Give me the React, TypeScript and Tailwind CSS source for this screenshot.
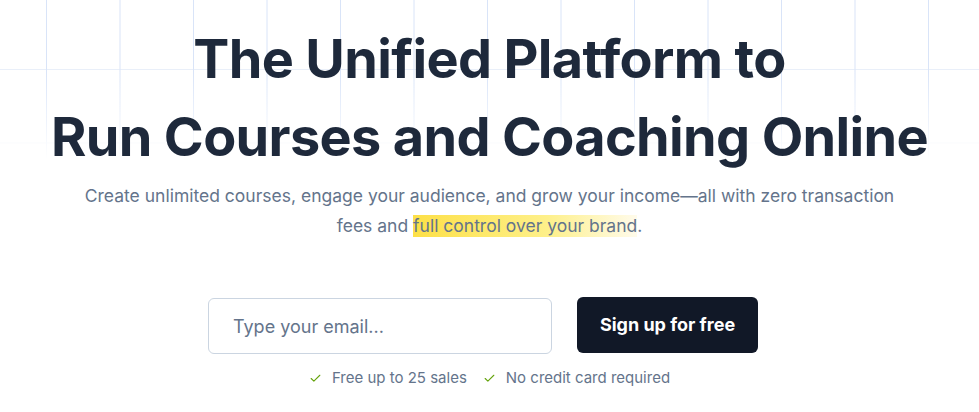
import React, { useState } from 'react';

function Check() {
    return (
        <svg viewBox="0 0 24 24" className="h-[13px] w-[13px] text-[#65a30d]" fill="none" stroke="currentColor" strokeWidth={2} strokeLinecap="round" strokeLinejoin="round">
            <path d="M20 6 9 17l-5-5" />
        </svg>
    );
}

export default function App() {
    const [email, setEmail] = useState('');

    return (
        <div className="relative min-h-screen overflow-hidden bg-white font-['Inter',sans-serif]">
            {/* faint grid behind the heading */}
            <div className="pointer-events-none absolute inset-x-0 top-0 h-[160px] bg-[linear-gradient(to_right,#d9e4f8_1px,transparent_1px),linear-gradient(to_bottom,#e9eff9_1px,transparent_1px)] bg-[size:73.5px_73.5px] bg-[position:46px_-4.5px] [mask-image:linear-gradient(to_bottom,black_45%,transparent)]" />

            <section className="relative flex flex-col items-center pt-5 text-center">
                <h1 className="text-[54px] font-bold leading-[78px] tracking-[-0.012em] text-[#1e293b]">
                    The Unified Platform to
                    <br />
                    Run Courses and Coaching Online
                </h1>

                <p className="mt-[5px] max-w-[830px] text-[17.5px] leading-[30px] text-[#64748b]">
                    Create unlimited courses, engage your audience, and grow your income—all with zero transaction fees and{' '}
                    <span className="bg-[linear-gradient(to_right,#fde047,#fef08a_60%,#fffbeb)] [box-decoration-break:clone] pb-px">full control over your brand</span>.
                </p>

                <form className="mt-[57px] flex gap-[25px] pr-[13px]" onSubmit={(e) => e.preventDefault()}>
                    <input
                        type="email"
                        placeholder="Type your email..."
                        value={email}
                        onChange={(e) => setEmail(e.target.value)}
                        className="h-[56px] w-[344px] rounded-md border border-[#cbd5e1] bg-white px-6 text-lg text-[#1e293b] placeholder:text-[#64748b] focus:outline-none"
                    />
                    <button
                        type="submit"
                        className="-mt-px h-[56px] w-[181px] rounded-md bg-[#111827] text-lg font-bold text-white"
                    >
                        Sign up for free
                    </button>
                </form>

                <div className="mt-3 flex items-center gap-4 text-[15px] leading-6 text-[#64748b]">
                    <span className="flex items-center gap-2.5">
                        <Check />
                        Free up to 25 sales
                    </span>
                    <span className="flex items-center gap-2.5">
                        <Check />
                        No credit card required
                    </span>
                </div>
            </section>
        </div>
    );
}
